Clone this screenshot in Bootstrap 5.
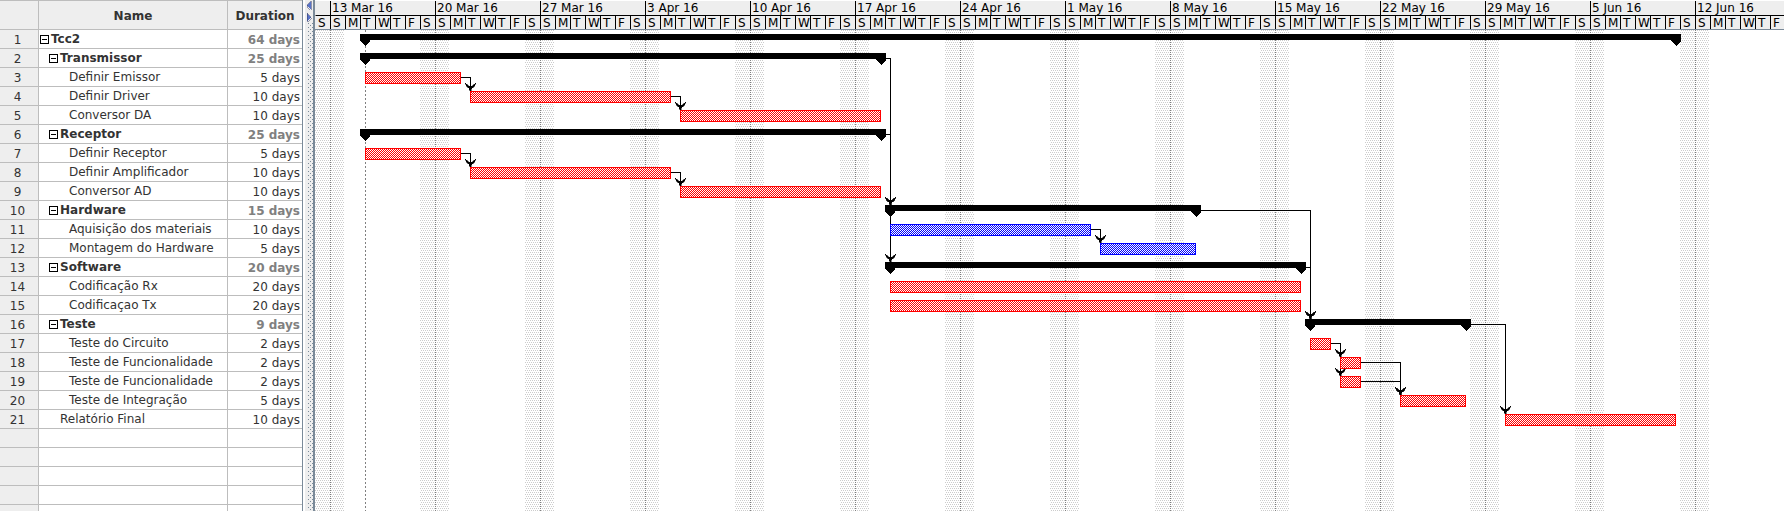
<!DOCTYPE html>
<html lang="en">
<head>
<meta charset="utf-8">
<meta name="viewport" content="width=device-width, initial-scale=1">
<title>Tcc2 – Gantt</title>
<link href="https://cdn.jsdelivr.net/npm/bootstrap@5.3.0/dist/css/bootstrap.min.css" rel="stylesheet">
<style>
  body { font: 12px/18px "DejaVu Sans", sans-serif; color: #333; background: #fff; }
  .sheet-pane { width: 303px; border-right: 1px solid #7a8a99; }
  .sheet { table-layout: fixed; width: 100%; border-collapse: separate; border-spacing: 0; }
  .sheet th, .sheet td { height: 19px; padding: 2px 0 0; line-height: 16px; border-right: 1px solid #bdbdbd; border-bottom: 1px solid #bdbdbd; white-space: nowrap; overflow: hidden; }
  .sheet th:last-child, .sheet td:last-child { border-right: 0; }
  .sheet thead th { height: 30px; background: #eee; border-top: 1px solid #bdbdbd; text-align: center; }
  .sheet tbody th { background: #eee; font-weight: 400; text-align: center; padding-right: 3px; }
  .sheet .task-name { padding-top: 1px; vertical-align: top; }
  .sheet .task-time { text-align: right; padding-right: 2px; }
  .sheet .lvl-0 { padding-left: 1px; }
  .sheet .lvl-1 { padding-left: 10px; }
  .sheet .lvl-1-leaf { padding-left: 21px; }
  .sheet .lvl-2 { padding-left: 30px; }
  .fold { width: 9px; height: 9px; margin-right: 2px; padding: 0; border: 1px solid #000; background: linear-gradient(#000, #000) center / 5px 1px no-repeat #fff; vertical-align: 0; }
  .is-summary .task-name { font-weight: 700; }
  .is-summary .task-time { font-weight: 700; color: #808080; }
  .splitter { width: 12px; padding-left: 2px; background: #fff; border-right: 2px solid #7a8a99; }
  .chart-head { height: 30px; color: #000; background: #eee; border-bottom: 1px solid #7a8a99; border-top: 1px solid #fff; line-height: 14px; }
  .week-title { height: 15px; border-left: 1px solid #000; border-bottom: 1px solid #000; padding-left: 1px; white-space: nowrap; }
  .day { width: 15px; height: 13px; border-left: 1px solid #000; padding-left: 2px; line-height: 14px; }
  .lead-in .week-title, .lead-in .day { border-left-color: transparent; }
</style>
</head>
<body>
<main class="d-flex vh-100 overflow-hidden">
  <section class="sheet-pane flex-shrink-0 overflow-hidden">
    <table class="sheet">
      <colgroup><col style="width:39px"><col style="width:189px"><col></colgroup>
      <thead><tr><th></th><th scope="col">Name</th><th scope="col">Duration</th></tr></thead>
      <tbody id="rows"></tbody>
    </table>
  </section>
  <div class="splitter flex-shrink-0">
    <svg class="d-block" width="8" height="100%" shape-rendering="crispEdges">
      <defs><pattern id="grip" width="4" height="4" patternUnits="userSpaceOnUse"><path d="M1 1h1v1h-1zM3 3h1v1h-1z" fill="#7a8a99"/></pattern></defs>
      <rect width="8" height="100%" fill="#eee"/>
      <rect x="2" y="23" width="6" height="100%" fill="url(#grip)"/>
      <path d="M6 1v9L2 5.500z" fill="#5a74c8" stroke="#333a66" stroke-width=".5"/>
      <path d="M2 13v9l4-4.500z" fill="#5a74c8" stroke="#333a66" stroke-width=".5"/>
    </svg>
  </div>
  <section class="d-flex flex-column flex-fill overflow-hidden" id="pane">
    <div class="chart-head d-flex flex-shrink-0 overflow-hidden" id="head"></div>
    <svg class="d-block flex-fill w-100" id="chart" shape-rendering="crispEdges" role="img" aria-label="Gantt chart"></svg>
  </section>
</main>
<script src="https://cdn.jsdelivr.net/npm/bootstrap@5.3.0/dist/js/bootstrap.bundle.min.js"></script>
<script>
  // name, level, duration, start x, end x, kind (s = summary, c = critical, n = normal)
  const tasks = [
    ['Tcc2', 0, 64, 50, 1361, 's'],
    ['Transmissor', 1, 25, 50, 566, 's'],
    ['Definir Emissor', 2, 5, 50, 146, 'c'],
    ['Definir Driver', 2, 10, 155, 356, 'c'],
    ['Conversor DA', 2, 10, 365, 566, 'c'],
    ['Receptor', 1, 25, 50, 566, 's'],
    ['Definir Receptor', 2, 5, 50, 146, 'c'],
    ['Definir Amplificador', 2, 10, 155, 356, 'c'],
    ['Conversor AD', 2, 10, 365, 566, 'c'],
    ['Hardware', 1, 15, 575, 881, 's'],
    ['Aquisição dos materiais', 2, 10, 575, 776, 'n'],
    ['Montagem do Hardware', 2, 5, 785, 881, 'n'],
    ['Software', 1, 20, 575, 986, 's'],
    ['Codificação Rx', 2, 20, 575, 986, 'c'],
    ['Codificaçao Tx', 2, 20, 575, 986, 'c'],
    ['Teste', 1, 9, 995, 1151, 's'],
    ['Teste do Circuito', 2, 2, 995, 1016, 'c'],
    ['Teste de Funcionalidade', 2, 2, 1025, 1046, 'c'],
    ['Teste de Funcionalidade', 2, 2, 1025, 1046, 'c'],
    ['Teste de Integração', 2, 5, 1085, 1151, 'c'],
    ['Relatório Final', 1, 10, 1190, 1361, 'c']
  ];
  const links = [[3,4],[4,5],[7,8],[8,9],[2,10],[2,13],[6,10],[11,12],[10,16],[13,16],[17,18],[17,19],[18,20],[19,20],[16,21]];
  const ROW = 19, DAY = 15;

  const body = [];
  for (let i = 0; i < 60; i++) {
    const t = tasks[i];
    if (!t) { body.push('<tr><th></th><td></td><td></td></tr>'); continue; }
    const sum = t[5] === 's';
    const lvl = t[1] === 1 && !sum ? 'lvl-1-leaf' : 'lvl-' + t[1];
    body.push(`<tr class="${sum ? 'is-summary' : ''}"><th scope="row">${i + 1}</th><td class="task-name ${lvl}">${sum ? '<button type="button" class="fold" aria-label="Collapse"></button>' : ''}${t[0]}</td><td class="task-time">${t[2]} days</td></tr>`);
  }
  document.getElementById('rows').innerHTML = body.join('');

  const months = ['Jan','Feb','Mar','Apr','May','Jun','Jul','Aug','Sep','Oct','Nov','Dec'];
  const dayCells = s => [...s].map(d => `<div class="day flex-shrink-0">${d}</div>`).join('');

  function draw() {
    // one lead-in Saturday, then as many days as the pane has room for
    let left = Math.ceil(document.getElementById('pane').clientWidth / DAY) - 1;
    let head = `<div class="lead-in flex-shrink-0"><div class="week-title"></div><div class="d-flex">${dayCells('S')}</div></div>`;
    let g = `<defs>
      <pattern id="off" width="2" height="4" patternUnits="userSpaceOnUse"><path d="M0 0h1v1h-1zM1 2h1v1h-1z" fill="#ccc"/></pattern>
      <pattern id="c" width="2" height="2" patternUnits="userSpaceOnUse"><rect width="2" height="2" fill="#fff"/><path d="M0 0h1v1h-1zM1 1h1v1h-1z" fill="#f00"/></pattern>
      <pattern id="n" width="2" height="2" patternUnits="userSpaceOnUse"><rect width="2" height="2" fill="#fff"/><path d="M0 0h1v1h-1zM1 1h1v1h-1z" fill="#00f"/></pattern>
    </defs>`;
    for (let i = 0; left > 0; i++, left -= 7) {
      const d = new Date(2016, 2, 13 + 7 * i), x = DAY + 7 * DAY * i;
      head += `<div class="flex-shrink-0"><div class="week-title">${d.getDate()} ${months[d.getMonth()]} 16</div><div class="d-flex">${dayCells('SMTWTFS'.slice(0, left))}</div></div>`;
      g += `<rect x="${x - DAY}" width="29" height="100%" fill="url(#off)"/><line x1="${x + .5}" x2="${x + .5}" y1="0" y2="100%" stroke="#808080" stroke-dasharray="1 1"/>`;
    }
    g += '<line x1="50.5" x2="50.5" y1="0" y2="100%" stroke="#808080" stroke-dasharray="2 2"/>';
    links.forEach(([a, b]) => {
      const x1 = tasks[a - 1][4], x2 = tasks[b - 1][3], y1 = (a - 1) * ROW + 9, y2 = (b - 1) * ROW + 4;
      g += `<path d="M${x1} ${y1 + .5}H${x2 + .5}V${y2}" fill="none" stroke="#000"/><path d="M${x2 - 5} ${y2 - 8}l4 3h3l4-3-2 4-2 1-1 3h-1l-1-3-2-1z" stroke="#000" stroke-width=".5"/>`;
    });
    tasks.forEach(([, , , x1, x2, k], i) => {
      const y = i * ROW + 4;
      g += k === 's'
        ? `<path d="M${x1 - 5} ${y}H${x2 + 5}V${y + 7}L${x2} ${y + 12}L${x2 - 5} ${y + 7}V${y + 6}H${x1 + 5}V${y + 7}L${x1} ${y + 12}L${x1 - 5} ${y + 7}z"/>`
        : `<rect x="${x1 + .5}" y="${y + .5}" width="${x2 - x1 - 1}" height="11" fill="url(#${k})" stroke="${k === 'c' ? '#f00' : '#00f'}"/>`;
    });
    document.getElementById('head').innerHTML = head;
    document.getElementById('chart').innerHTML = g;
  }
  draw();
  addEventListener('resize', draw);
</script>
</body>
</html>
